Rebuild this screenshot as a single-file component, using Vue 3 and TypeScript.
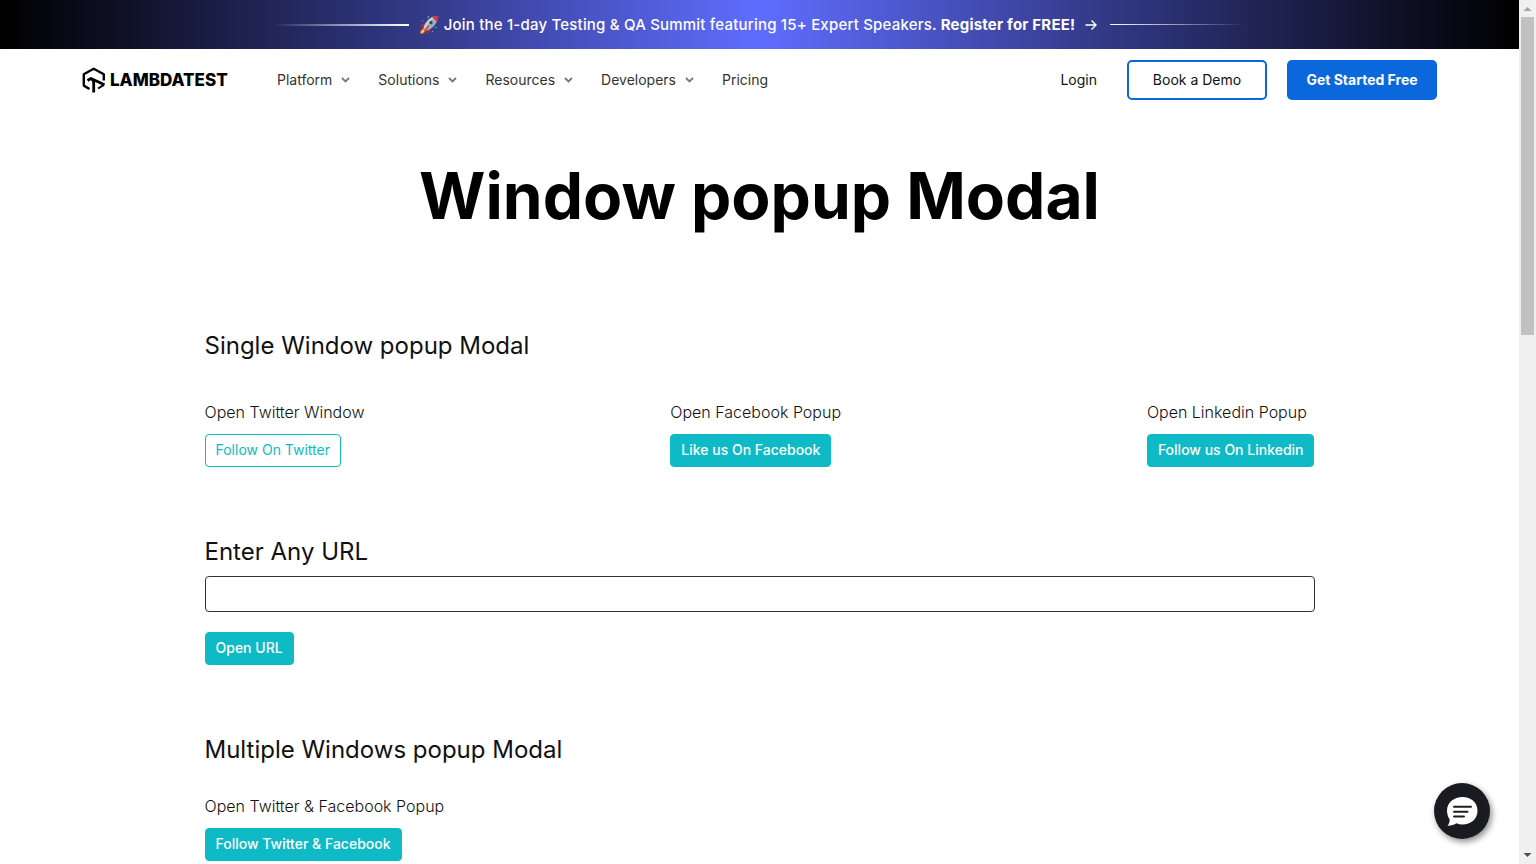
<script setup lang="ts">
import { ref } from 'vue'

const menus: string[] = ['Platform', 'Solutions', 'Resources', 'Developers']

interface Popup {
  label: string
  action: string
  outlined?: boolean
}

const singlePopups: Popup[] = [
  { label: 'Open Twitter Window', action: 'Follow On Twitter', outlined: true },
  { label: 'Open Facebook Popup', action: 'Like us On Facebook' },
  { label: 'Open Linkedin Popup', action: 'Follow us On Linkedin' },
]

const url = ref<string>('')
</script>

<template>
  <div class="window">
    <div class="page">
      <a class="banner" href="#">
        <span class="line line-left"></span>
        <svg class="rocket" viewBox="0 0 20 20" aria-hidden="true">
          <path d="M6.500 8.500 3.200 8.800 1 12.500l4.600-.8z" fill="#c8202c" />
          <path d="M11.600 13.400 11.300 16.800 7.800 19.200l.7-4.800z" fill="#c8202c" />
          <path d="M4.800 12.600 1.600 15.800 1.200 19l3.200-.6 3.200-3.200z" fill="#f58220" />
          <path d="M4.900 14.400 2.800 16.200 2.100 18.100l2-.8 1.900-1.900z" fill="#ffe36b" />
          <path d="M4.800 12.800C5.800 8.200 9.400 3.600 14.800 1.600l3.600 3.600C16.400 10.600 12 14.300 7.400 15.400z" fill="#94b3c4" />
          <path d="M4.800 12.800C5.800 8.200 9.400 3.600 14.800 1.600l1 1C11.600 5.600 8.200 9.600 6 14z" fill="#bcd3dc" />
          <path d="M13.200 2.300C15.200 1.100 17.500.7 19.300.7c0 1.900-.4 4.100-1.600 6.100z" fill="#e2343c" />
          <circle cx="12" cy="7.700" r="1.900" fill="#5d727d" />
          <circle cx="12" cy="7.700" r="1.100" fill="#24333e" />
          <path d="m9.300 10.300-4.500 5.900.9.500 4.500-5.600z" fill="#d9262f" />
          <g fill="#b9c5ef">
            <circle cx="9.300" cy="2" r=".7" /><circle cx="3.700" cy="5.700" r=".5" />
            <circle cx="16.800" cy="12.300" r=".6" /><circle cx="13.600" cy="16.600" r=".5" />
          </g>
        </svg>
        <span class="banner-text">Join the 1-day Testing &amp; QA Summit featuring 15+ Expert Speakers. <b>Register for FREE!</b></span>
        <svg class="arrow" viewBox="0 0 12 12" aria-hidden="true">
          <path d="M.5 6h10M6.500 1.500 11 6l-4.500 4.500" fill="none" stroke="#fff" stroke-width="1.400" />
        </svg>
        <span class="line line-right"></span>
      </a>

      <header class="header">
        <a class="logo" href="#">
          <svg viewBox="0 0 24 26" aria-hidden="true">
            <path
              d="M7.500 22 1.800 18.600V7.200L11.700 1.700 21.800 7.200V13.500"
              fill="none" stroke="#000" stroke-width="2.400" stroke-linejoin="round"
            />
            <path
              d="M11.700 25.500V15.500Q11.700 13 9.200 11.800M5.500 13.500 9 11.500 22.500 17.800"
              fill="none" stroke="#000" stroke-width="2.800" stroke-linejoin="round"
            />
            <path d="M22 17.800 16 21.500" fill="none" stroke="#000" stroke-width="2" />
          </svg>
          <span>LAMBDATEST</span>
        </a>
        <nav class="nav">
          <button v-for="menu in menus" :key="menu" type="button" class="menu">
            {{ menu }}
            <svg viewBox="0 0 9 6" aria-hidden="true">
              <path d="M1 1 4.500 4.500 8 1" fill="none" stroke="#777" stroke-width="1.800" />
            </svg>
          </button>
          <a class="menu" href="#">Pricing</a>
        </nav>
        <div class="actions">
          <a class="login" href="#">Login</a>
          <button type="button" class="demo">Book a Demo</button>
          <a class="start" href="#">Get Started Free</a>
        </div>
      </header>

      <main>
        <h1>Window popup Modal</h1>
        <div class="content">
          <section class="single">
            <h2>Single Window popup Modal</h2>
            <div class="popups">
              <div v-for="popup in singlePopups" :key="popup.action">
                <p>{{ popup.label }}</p>
                <button type="button" class="btn" :class="{ outlined: popup.outlined }">{{ popup.action }}</button>
              </div>
            </div>
          </section>

          <form class="url-form" @submit.prevent>
            <h2><label for="url">Enter Any URL</label></h2>
            <input id="url" v-model="url" type="text" />
            <button type="submit" class="btn">Open URL</button>
          </form>

          <section class="multiple">
            <h2>Multiple Windows popup Modal</h2>
            <p>Open Twitter &amp; Facebook Popup</p>
            <button type="button" class="btn">Follow Twitter &amp; Facebook</button>
          </section>
        </div>
      </main>
    </div>

    <div class="scrollbar" aria-hidden="true">
      <svg viewBox="0 0 17 17"><path d="M4.500 11h8l-4-4z" fill="#a3a3a3" /></svg>
      <div class="track"><div class="thumb"></div></div>
      <svg viewBox="0 0 17 17"><path d="M4.500 6h8l-4 4z" fill="#505050" /></svg>
    </div>

    <button type="button" class="chat" aria-label="Chat">
      <svg viewBox="0 0 32 32" aria-hidden="true">
        <path d="M16.500 2C25 2 31.500 7.500 31.500 15.700S25 29.500 16.500 29.500c-2.300 0-4.300-.4-6-1.200-2.300 1.500-5.500 2.600-9 2.500 1.500-1.800 2.200-4 2.200-6.300C2 21.700 1 18.900 1 15.700 1 7.500 8 2 16.500 2z" fill="#fff" />
        <path d="M8 11.700h17M8 16.700h13.500M8 21.600h10" fill="none" stroke="#1d1d23" stroke-width="2" stroke-linecap="round" />
      </svg>
    </button>
  </div>
</template>

<style>
body {
  margin: 0;
  overflow: hidden;
}
</style>

<style scoped>
* {
  box-sizing: border-box;
}

.window {
  display: grid;
  grid-template-columns: minmax(0, 1fr) 17px;
  height: 100vh;
  background: #fff;
  color: #111;
  font-family: Inter, "Liberation Sans", sans-serif;
  font-size: 14px;
}

.page {
  overflow: hidden;
}

a {
  color: inherit;
  text-decoration: none;
}

button {
  font: inherit;
  color: inherit;
  cursor: pointer;
}

.banner {
  display: flex;
  align-items: center;
  justify-content: center;
  height: 49px;
  color: #fff;
  background: linear-gradient(90deg, #000, #2e347a 25%, #5f6dff 50%, #2e347a 75%, #000);
}

.banner-text {
  margin-left: 5px;
  font-size: 15px;
  font-weight: 500;
  letter-spacing: 0.2px;
  white-space: nowrap;
}

.banner-text b {
  font-weight: 700;
}

.line {
  width: 136px;
  height: 2px;
}

.line-left {
  margin-right: 10px;
  background: linear-gradient(90deg, transparent, #fff);
}

.line-right {
  height: 1px;
  margin-left: 13px;
  background: linear-gradient(90deg, #fff, transparent);
}

.rocket {
  width: 20px;
  height: 20px;
}

.arrow {
  width: 12px;
  height: 12px;
  margin-left: 10px;
}

.header {
  display: flex;
  align-items: center;
  height: 62px;
  padding: 0 82px;
}

.logo {
  display: flex;
  align-items: center;
  gap: 4px;
  width: 195px;
  color: #000;
  font-size: 17px;
  font-weight: 800;
}

.logo svg {
  width: 24px;
  height: 26px;
}

.nav {
  display: flex;
  gap: 28px;
}

.menu {
  display: flex;
  align-items: center;
  gap: 9px;
  padding: 0 0 2px;
  border: 0;
  background: none;
  color: #333;
}

.menu svg {
  width: 9px;
  height: 6px;
  margin-top: 2px;
}

.actions {
  display: flex;
  align-items: center;
  margin-left: auto;
}

.login {
  margin-right: 30px;
  padding-bottom: 2px;
}

.demo,
.start {
  display: flex;
  align-items: center;
  justify-content: center;
  height: 40px;
  padding: 0 0 2px;
  border-radius: 5px;
}

.demo {
  width: 140px;
  margin-right: 20px;
  border: 2px solid #0a68d9;
  background: #fff;
}

.start {
  width: 150px;
  background: #0a68dc;
  color: #fff;
  font-weight: 700;
}

h1 {
  margin: 45px 0 0;
  color: #000;
  font-size: 64px;
  font-weight: 700;
  line-height: 80px;
  text-align: center;
}

.content {
  max-width: 1140px;
  margin: 90px auto 0;
  padding: 0 15px;
}

h2 {
  margin: 0;
  font-size: 24px;
  font-weight: 400;
  line-height: 40px;
}

p {
  margin: 0 0 10px;
  font-size: 16px;
  font-weight: 300;
  line-height: 24px;
}

.btn {
  display: block;
  height: 33px;
  padding: 0 10px 2px;
  border: 1px solid #0ebac5;
  border-radius: 4px;
  background: #0ebac5;
  color: #fff;
  font-weight: 500;
}

.btn.outlined {
  background: #fff;
  color: #0ebac5;
  font-weight: 400;
}

.popups {
  display: flex;
  justify-content: space-between;
  margin-top: 34px;
}

.url-form {
  margin-top: 65px;
}

.url-form input {
  display: block;
  width: 100%;
  height: 36px;
  margin: 4px 0 20px;
  padding: 0 10px;
  border: 1px solid #333;
  border-radius: 4px;
  background: #fff;
  font: inherit;
}

.multiple {
  margin-top: 65px;
}

.multiple p {
  margin-top: 24px;
}

.scrollbar {
  display: flex;
  flex-direction: column;
  background: #f0f0f0;
}

.scrollbar svg {
  width: 17px;
  height: 17px;
}

.track {
  flex: 1;
  padding: 0 2px;
}

.thumb {
  height: 38.3%;
  background: #c1c1c1;
}

.chat {
  position: fixed;
  right: 46px;
  bottom: 25px;
  display: flex;
  align-items: center;
  justify-content: center;
  width: 56px;
  height: 56px;
  padding: 0;
  border: 0;
  border-radius: 50%;
  background: #1a1b20;
  box-shadow: 2px 3px 6px rgba(0, 0, 0, 0.45);
}

.chat svg {
  width: 32px;
  height: 32px;
}
</style>
